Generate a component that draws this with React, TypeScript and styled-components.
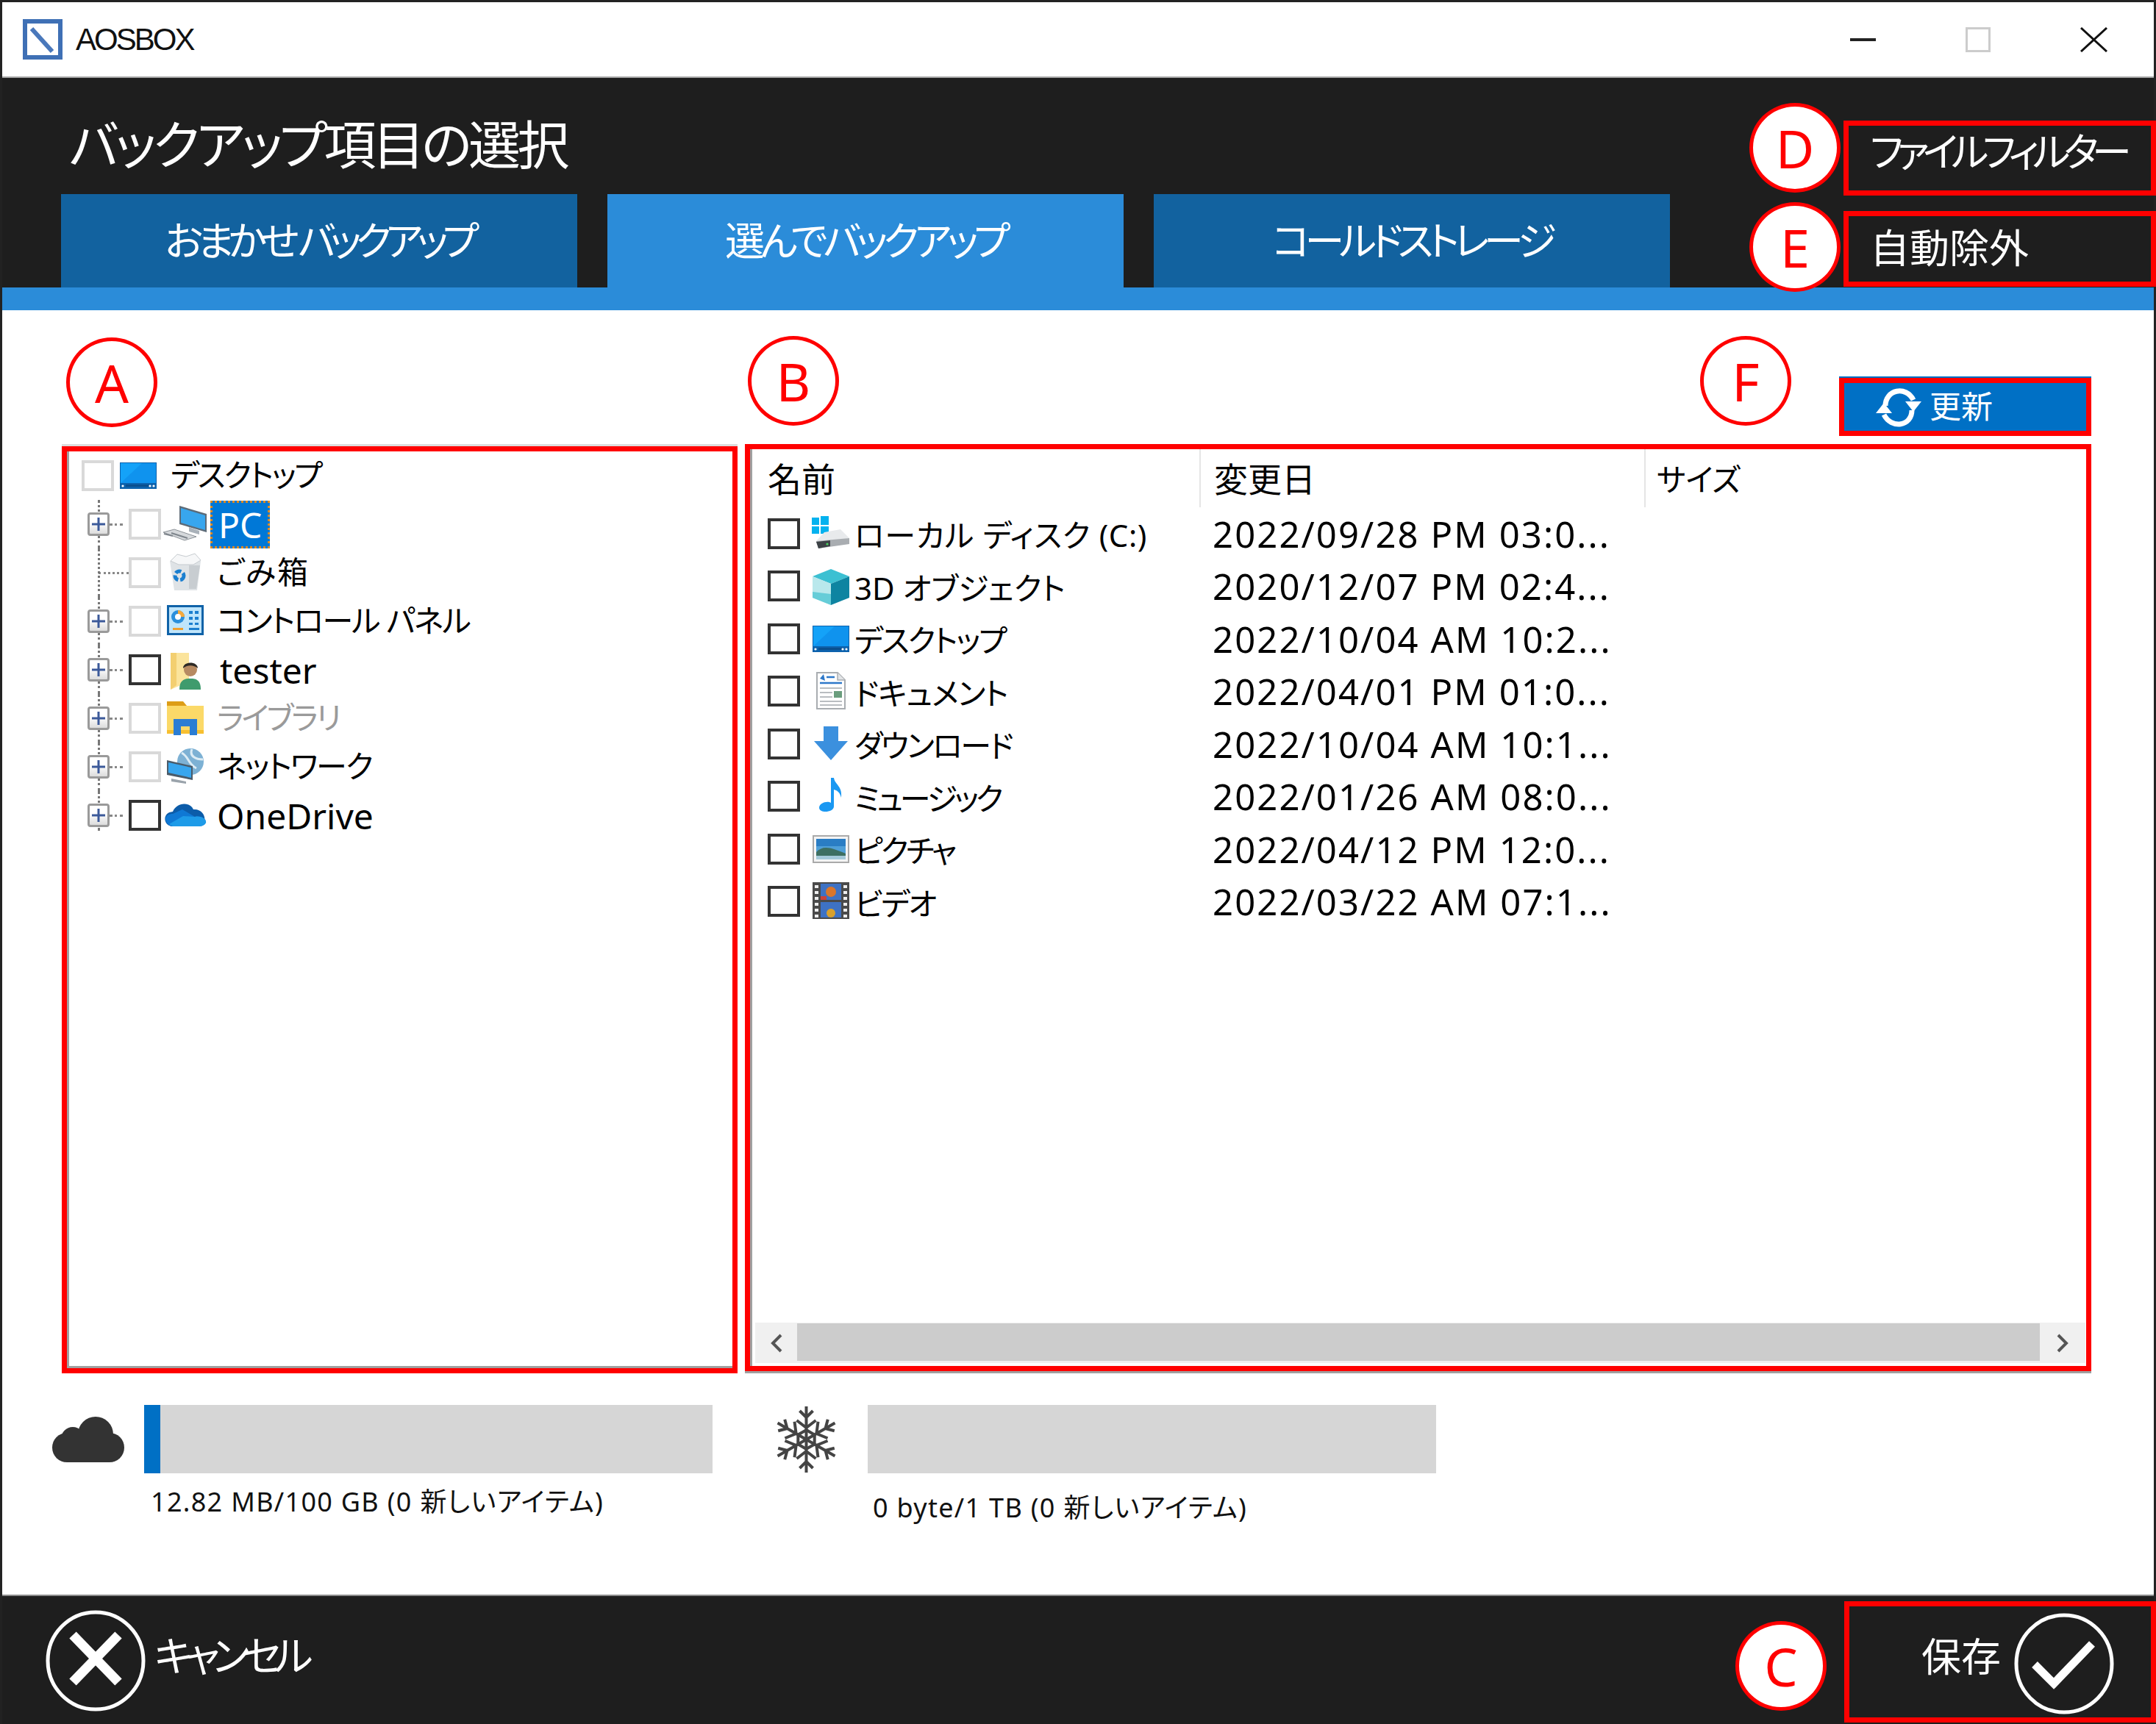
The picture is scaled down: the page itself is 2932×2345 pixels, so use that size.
import React from 'react'
import styled, { createGlobalStyle } from 'styled-components'

const FONT = '"Noto Sans", "Noto Sans CJK JP", sans-serif'

const Global = createGlobalStyle`
  html, body { margin: 0; padding: 0; background: #fff; }
  body { width: 2932px; height: 2345px; overflow: hidden; font-family: ${FONT}; font-feature-settings: "palt" 1; }
  * { box-sizing: border-box; }
`

const Window = styled.div`
  position: relative;
  width: 2932px;
  height: 2345px;
  display: flex;
  flex-direction: column;
  background: #fff;
  border-left: 3px solid #222;
  border-right: 3px solid #222;
`
const TitleBar = styled.div`
  height: 106px;
  flex: none;
  display: flex;
  align-items: center;
  padding: 0 63px 0 28px;
  border-top: 3px solid #222;
  border-bottom: 2px solid #a5a5a5;
`
const AppName = styled.span`
  margin-left: 18px;
  font-family: "Liberation Sans", sans-serif;
  font-size: 42px;
  letter-spacing: -3px;
  color: #111;
`
const WinControls = styled.div`
  margin-left: auto;
  display: flex;
  align-items: center;
  gap: 122px;
`
const Header = styled.div`
  height: 285px;
  flex: none;
  display: flex;
  justify-content: space-between;
  background: #1e1e1e;
`
const HeaderLeft = styled.div`
  padding-left: 80px;
  display: flex;
  flex-direction: column;
`
const Title = styled.div`
  height: 158px;
  padding: 14px 0 0 11px;
  display: flex;
  align-items: center;
  color: #fff;
  font-size: 71px;
  letter-spacing: -4.6px;
`
const Tabs = styled.div`
  display: flex;
  gap: 41px;
`
const Tab = styled.div<{ $active?: boolean; $ls: number }>`
  width: 702px;
  height: 127px;
  padding-bottom: 6px;
  display: flex;
  align-items: center;
  justify-content: center;
  color: #fff;
  font-size: 54px;
  white-space: pre;
  letter-spacing: ${p => p.$ls}px;
  background: ${p => (p.$active ? '#2b8cd9' : '#12629f')};
`
const HeaderRight = styled.div`
  width: 425px;
  margin: 58px -3px 0 0;
  display: flex;
  flex-direction: column;
  gap: 21px;
`
const HeaderLink = styled.div<{ $h: number; $pb: number; $ls: number }>`
  height: ${p => p.$h}px;
  padding: 0 0 ${p => p.$pb}px 29px;
  display: flex;
  align-items: center;
  border: 7px solid #f00;
  color: #fff;
  font-size: 54px;
  white-space: nowrap;
  letter-spacing: ${p => p.$ls}px;
`
const Strip = styled.div`
  height: 31px;
  flex: none;
  background: #2b8cd9;
`
const Content = styled.div`
  flex: 1;
  display: flex;
  flex-direction: column;
`
const Toolbar = styled.div`
  height: 182px;
  flex: none;
  padding: 90px 85px 0 0;
  display: flex;
  justify-content: flex-end;
  align-items: flex-start;
`
const UpdateButton = styled.div`
  width: 343px;
  height: 79px;
  margin-top: 2px;
  padding-left: 42px;
  display: flex;
  align-items: center;
  gap: 10px;
  background: #0070c5;
  border: 7px solid #f00;
  box-shadow: 0 -2px 0 #0070c5;
  color: #fff;
  font-size: 43px;
`
const UpdateText = styled.span`
  margin-top: -6px;
`
const PanelRow = styled.div`
  height: 1264px;
  flex: none;
  padding: 0 85px 0 81px;
  display: flex;
  gap: 10px;
`
const TreePanel = styled.div`
  width: 919px;
  height: 1261px;
  margin-top: 3px;
  border: 7px solid #f00;
  box-shadow: 0 -3px 0 #ddd;
`
const TreeInner = styled.div`
  height: 100%;
  border-left: 3px solid #a0a0a0;
  border-bottom: 3px solid #a0a0a0;
`
const TreeRow = styled.div<{ $root?: boolean; $last?: boolean }>`
  position: relative;
  height: 66px;
  display: flex;
  align-items: center;
  padding-left: ${p => (p.$root ? 17 : 25)}px;
  font-size: 42px;
  color: #000;
  ${p => !p.$root && `
    &::before {
      content: "";
      position: absolute;
      left: 39px;
      top: 0;
      bottom: ${p.$last ? 12 : 0}px;
      border-left: 3px dotted #777;
    }
  `}
`
const Expander = styled.span`
  position: relative;
  z-index: 1;
  width: 30px;
  height: 32px;
  flex: none;
  display: flex;
  align-items: center;
  justify-content: center;
  border: 3px solid #9a9a9a;
  border-radius: 4px;
  background: linear-gradient(#fff 40%, #dcdcdc);
`
const ExpanderSpace = styled.span`
  width: 15px;
  flex: none;
`
const Branch = styled.span<{ $leaf?: boolean }>`
  width: ${p => (p.$leaf ? 41 : 26)}px;
  flex: none;
  padding-right: ${p => (p.$leaf ? 0 : 8)}px;
  &::after {
    content: "";
    display: block;
    border-top: 3px dotted #888;
  }
`
const Check = styled.span<{ $dim?: boolean }>`
  width: 44px;
  height: 42px;
  flex: none;
  background: #fff;
  border: 4px solid ${p => (p.$dim ? '#d9d9d9' : '#333')};
`
const IconSlot = styled.span`
  width: 50px;
  height: 44px;
  flex: none;
  margin-left: 8px;
  display: flex;
  & > svg { width: 50px; height: 44px; overflow: visible; }
`
const TreeLabel = styled.span<{ $gap: number; $ls: number; $dim?: boolean; $selected?: boolean; $latin?: boolean }>`
  margin-left: ${p => p.$gap}px;
  white-space: pre;
  color: ${p => (p.$dim ? '#9a9a9a' : '#000')};
  letter-spacing: ${p => p.$ls}px;
  margin-bottom: 8px;
  ${p => p.$latin && 'font-size: 48px; margin-bottom: 0;'}
  ${p => p.$selected && `
    margin-left: 9px;
    height: 65px;
    padding: 0 11px;
    display: flex;
    align-items: center;
    color: #fff;
    background: #0078d7;
    outline: 3px dotted #e08a1e;
    outline-offset: -3px;
  `}
`
const ListPanel = styled.div`
  width: 1831px;
  height: 1261px;
  border: 7px solid #f00;
  box-shadow: 0 3px 0 #a0a0a0;
`
const ListInner = styled.div`
  height: 100%;
  display: flex;
  flex-direction: column;
  border-left: 3px solid #a0a0a0;
`
const Columns = styled.div`
  display: grid;
  grid-template-columns: 608px 605px 1fr;
`
const HeaderRow = styled(Columns)`
  height: 79px;
  flex: none;
`
const HeadCell = styled.div<{ $first?: boolean; $size?: number; $pl: number }>`
  display: flex;
  align-items: center;
  padding: 0 0 3px ${p => p.$pl}px;
  font-size: ${p => p.$size ?? 46}px;
  color: #000;
  ${p => !p.$first && 'border-left: 2px solid #e5e5e5;'}
`
const ListRow = styled(Columns)`
  height: 71.5px;
  flex: none;
  align-items: center;
  font-size: 42px;
  color: #000;
`
const NameCell = styled.div`
  padding-left: 21px;
  display: flex;
  align-items: center;
`
const ListIcon = styled(IconSlot)`
  margin-left: 17px;
`
const NameText = styled.span<{ $ls: number }>`
  margin-left: 7px;
  white-space: pre;
  letter-spacing: ${p => p.$ls}px;
`
const DateCell = styled.div`
  padding-left: 18px;
  white-space: pre;
  font-size: 49px;
  line-height: 60px;
  letter-spacing: 2.1px;
`
const Scrollbar = styled.div`
  height: 55px;
  flex: none;
  margin: auto 1px 4px 4px;
  display: flex;
  background: #f0f0f0;
`
const ScrollArrow = styled.div<{ $w: number }>`
  width: ${p => p.$w}px;
  flex: none;
  display: flex;
  align-items: center;
  justify-content: center;
`
const ScrollThumb = styled.div`
  flex: 1;
  margin: 1px 0 3px;
  background: #ccc;
`
const StorageRow = styled.div`
  flex: 1;
  padding: 43px 0 0 68px;
  display: flex;
  gap: 86px;
`
const Storage = styled.div<{ $icon: number; $gap: number }>`
  display: grid;
  grid-template-columns: ${p => p.$icon}px 773px;
  column-gap: ${p => p.$gap}px;
  align-content: start;
`
const StorageIcon = styled.div`
  height: 93px;
  display: flex;
  align-items: center;
`
const Bar = styled.div`
  height: 93px;
  background: #d6d6d6;
`
const BarFill = styled.div`
  height: 100%;
  background: #0070c5;
`
const StorageText = styled.div<{ $mt: number; $pl: number }>`
  grid-column: 2;
  margin-top: ${p => p.$mt}px;
  padding-left: ${p => p.$pl}px;
  line-height: 44px;
  font-size: 36px;
  letter-spacing: 1.3px;
  white-space: pre;
  color: #111;
`
const Footer = styled.div`
  height: 176px;
  flex: none;
  display: flex;
  justify-content: space-between;
  background: #1e1e1e;
  border-top: 2px solid #8a8a8a;
  color: #fff;
`
const CancelButton = styled.div`
  padding: 19px 0 0 59px;
  display: flex;
  align-items: flex-start;
  gap: 12px;
  font-size: 56px;
  letter-spacing: -9.5px;
`
const CancelText = styled.span`
  margin-top: 18px;
`
const SaveBox = styled.div`
  width: 424px;
  height: 165px;
  margin: 7px -3px 0 0;
  padding: 5px 50px 0 0;
  display: flex;
  justify-content: flex-end;
  align-items: center;
  gap: 18px;
  border: 7px solid #f00;
  font-size: 54px;
`
const SaveText = styled.span`
  margin-top: -25px;
`
const Marker = styled.div<{ $x: number; $y: number }>`
  position: absolute;
  left: ${p => p.$x - 3}px;
  top: ${p => p.$y}px;
  width: 124px;
  height: 122px;
  display: flex;
  align-items: center;
  justify-content: center;
  background: #fff;
  border: 5px solid #f00;
  border-radius: 50%;
  color: #f00;
  font-family: "Noto Sans", sans-serif;
  font-size: 72px;
  line-height: 1;
`

const Logo = () => (
  <svg width="54" height="55" viewBox="0 0 54 55">
    <rect x="3" y="3" width="48" height="49" fill="#fff" stroke="#3f70b5" strokeWidth="6" />
    <path d="M12 13 L40 44" stroke="#4a78bb" strokeWidth="6" />
  </svg>
)

const Minimize = () => (
  <svg width="35" height="4" viewBox="0 0 35 4"><rect width="35" height="4" fill="#222" /></svg>
)
const Maximize = () => (
  <svg width="34" height="34" viewBox="0 0 34 34"><rect x="1.5" y="1.5" width="31" height="31" fill="none" stroke="#ccc" strokeWidth="3" /></svg>
)
const CloseX = () => (
  <svg width="37" height="34" viewBox="0 0 37 34"><path d="M1 1 L36 33 M36 1 L1 33" stroke="#111" strokeWidth="3" /></svg>
)

const PlusIcon = () => (
  <svg width="18" height="18" viewBox="0 0 18 18"><path d="M9 0 V18 M0 9 H18" stroke="#3c5a9a" strokeWidth="3" /></svg>
)

const Icon = {
  desktop: (
    <svg viewBox="0 0 50 44">
      <rect x="0" y="4" width="50" height="36" fill="#0d62ad" />
      <rect x="1" y="5" width="48" height="27" fill="#14a2f8" />
      <path d="M1 32 L30 5 H49 V32 Z" fill="#0f93ee" />
      <rect x="8" y="34" width="32" height="3" fill="#0a4f8e" />
      <circle cx="4" cy="36" r="1.6" fill="#fff" /><circle cx="41" cy="36" r="1.6" fill="#fff" /><circle cx="46" cy="36" r="1.6" fill="#fff" />
    </svg>
  ),
  pc: (
    <svg viewBox="0 0 50 44">
      <path d="M17 -3 L54 8 V33 L17 22 Z" fill="#5d6b78" />
      <path d="M19 0 L52 10 V30 L19 20 Z" fill="#38a6ee" />
      <path d="M30 26 L44 31 V36 L30 32 Z" fill="#aab2ba" />
      <path d="M-5 33 L10 29 L40 39 L24 44 Z" fill="#d5d8db" stroke="#8c9298" strokeWidth="1" />
      <path d="M-4 35 L8 38 M6 34 L28 41" stroke="#7e858c" strokeWidth="2" />
    </svg>
  ),
  trash: (
    <svg viewBox="0 0 50 44">
      <path d="M4 6 L46 6 L41 46 L10 46 Z" fill="#dfe3e6" />
      <path d="M5 6 L14 -3 L26 0 L38 -4 L46 5 L36 11 L16 11 Z" fill="#f6f7f8" stroke="#c6cbcf" strokeWidth="1" />
      <path d="M30 12 V44 H40 L45 12 Z" fill="#c8cdd1" />
      <circle cx="17" cy="26" r="6" fill="none" stroke="#1a7fd0" strokeWidth="5" strokeDasharray="8 3" />
    </svg>
  ),
  control: (
    <svg viewBox="0 0 50 44">
      <rect x="0" y="0" width="50" height="41" fill="#0f62a8" />
      <rect x="3" y="3" width="44" height="35" fill="#bfe5fb" />
      <circle cx="15" cy="16" r="9" fill="#2a8fdc" />
      <path d="M15 16 V7 A9 9 0 0 1 24 16 Z" fill="#f6a93b" />
      <circle cx="15" cy="16" r="4" fill="#fff" />
      <path d="M30 8 h5 v4 h-5 z M38 8 h5 v4 h-5 z M30 16 h5 v4 h-5 z M38 16 h5 v4 h-5 z M30 24 h5 v3 h-5 z M38 24 h5 v3 h-5 z" fill="#1c7fcf" />
      <rect x="8" y="31" width="14" height="3" fill="#f0a030" />
      <rect x="30" y="31" width="14" height="3" fill="#1c7fcf" />
    </svg>
  ),
  user: (
    <svg viewBox="0 0 50 44">
      <path d="M5 -1 L30 -1 V38 L5 49 Z" fill="#fbe49c" />
      <path d="M5 -1 L13 -1 V43 L5 49 Z" fill="#f3cf70" />
      <path d="M17 49 C17 36 24 34 32 34 C40 34 46 36 46 49 Z" fill="#3f9b6d" />
      <circle cx="32" cy="22" r="9" fill="#b78a62" />
      <path d="M22 20 C22 10 42 10 42 20 C36 15 28 15 22 20 Z" fill="#2e2a26" />
    </svg>
  ),
  library: (
    <svg viewBox="0 0 50 44">
      <path d="M0 -1 H22 L27 5 H0 Z" fill="#dd9d17" />
      <rect x="0" y="5" width="50" height="38" fill="#fbd968" />
      <rect x="0" y="38" width="50" height="5" fill="#f7bf30" />
      <path d="M9 45 V23 H41 V45 H31 V33 H19 V45 Z" fill="#2b7dd3" />
    </svg>
  ),
  network: (
    <svg viewBox="0 0 50 44">
      <circle cx="32" cy="15" r="18" fill="#7db1d4" />
      <path d="M20 3 C30 8 28 18 40 24 M34 -2 C30 8 40 12 49 12" stroke="#dcecf5" strokeWidth="3" fill="none" />
      <path d="M0 13 L35 21 V40 L0 33 Z" fill="#4a5b69" />
      <path d="M2 16 L33 23 V37 L2 30 Z" fill="#38a6ee" />
      <path d="M6 38 L26 42 V45 L6 42 Z" fill="#9aa3ab" />
    </svg>
  ),
  onedrive: (
    <svg viewBox="0 0 50 44">
      <path d="M7 37 C-6 35 -6 18 8 17 C13 4 31 3 36 14 C52 12 58 35 42 37 Z" fill="#0c5ca9" />
      <path d="M-2 27 C-1 22 3 20 8 20 L21 14 L38 24 C48 22 54 28 53 32 C51 36 47 37 42 37 H8 C3 37 -1 33 -2 27 Z" fill="#0f78d4" />
      <path d="M3 34 L22 23 L38 24 C48 22 54 28 53 32 C51 36 47 37 42 37 H8 Z" fill="#1e9be8" />
    </svg>
  ),
  disk: (
    <svg viewBox="0 0 50 44">
      <path d="M-1 0 h10 v10 h-10 z M11 -2 h11 v12 h-11 z M-1 12 h10 v10 h-10 z M11 12 h11 v10 h-11 z" fill="#04b2ef" />
      <path d="M5 32 L16 20 L38 16 L50 28 L15 35 Z" fill="#e8eaec" />
      <path d="M5 32 L50 28 V36 L8 42 Z" fill="#a9adb1" />
      <path d="M5 33 L24 31 V39 L8 42 Z" fill="#3d4246" />
      <circle cx="20" cy="36" r="1.6" fill="#49d45e" />
    </svg>
  ),
  cube: (
    <svg viewBox="0 0 50 44">
      <path d="M0 9 L25 -1 L50 9 L25 19 Z" fill="#3cc0d2" />
      <path d="M0 9 L25 19 V48 L0 38 Z" fill="#b9e8ec" />
      <path d="M50 9 L25 19 V48 L50 38 Z" fill="#0e84a1" />
      <path d="M0 30 L25 33 V48 L0 38 Z" fill="#66cdd8" />
    </svg>
  ),
  doc: (
    <svg viewBox="0 0 50 44">
      <path d="M6 -3 H34 L44 7 V46 H6 Z" fill="#fff" stroke="#a9adb1" strokeWidth="2" />
      <path d="M34 -3 V7 H44" fill="#e2e4e6" stroke="#a9adb1" strokeWidth="1.5" />
      <path d="M10 5 L15 -1 L17 8 Z" fill="#2d78c9" />
      <path d="M19 3 H30 M10 11 H40" stroke="#2d78c9" strokeWidth="2.5" />
      <path d="M10 18 H40 M10 24 H27 M10 30 H27 M10 36 H40 M10 41 H40" stroke="#b9bdc1" strokeWidth="2" />
      <rect x="29" y="22" width="11" height="9" fill="#6a9d7d" />
    </svg>
  ),
  download: (
    <svg viewBox="0 0 50 44">
      <path d="M15 -2 H35 V18 H48 L25 44 L2 18 H15 Z" fill="#3b90de" />
    </svg>
  ),
  music: (
    <svg viewBox="0 0 50 44">
      <path d="M25 -3 H29 C30 6 41 8 39 24 C37 16 33 14 29 13 V36 C29 44 10 46 9 38 C9 31 20 28 25 31 Z" fill="#1a98f2" />
    </svg>
  ),
  picture: (
    <svg viewBox="0 0 50 44">
      <rect x="1" y="4" width="48" height="36" fill="#f4f4f4" stroke="#aaa" strokeWidth="2" />
      <rect x="5" y="8" width="40" height="28" fill="#4f9fd8" />
      <path d="M5 8 H45 V18 H5 Z" fill="#2a7dc4" />
      <path d="M5 26 C15 16 25 20 45 28 V36 H5 Z" fill="#3d6f62" />
      <path d="M5 31 H45 V36 H5 Z" fill="#a4c9d9" />
    </svg>
  ),
  video: (
    <svg viewBox="0 0 50 44">
      <rect x="0" y="-4" width="50" height="50" fill="#4a4a4a" />
      <path d="M3 0 h5 v4 h-5 z M3 8 h5 v4 h-5 z M3 16 h5 v4 h-5 z M3 24 h5 v4 h-5 z M3 32 h5 v4 h-5 z M3 40 h5 v4 h-5 z M42 0 h5 v4 h-5 z M42 8 h5 v4 h-5 z M42 16 h5 v4 h-5 z M42 24 h5 v4 h-5 z M42 32 h5 v4 h-5 z M42 40 h5 v4 h-5 z" fill="#eee" />
      <rect x="11" y="-2" width="28" height="22" fill="#3e72c4" />
      <rect x="11" y="23" width="28" height="21" fill="#3e72c4" />
      <circle cx="25" cy="9" r="7" fill="#d9762c" />
      <circle cx="25" cy="38" r="6" fill="#d9a12c" />
      <rect x="11" y="15" width="8" height="5" fill="#c9423c" />
    </svg>
  ),
}

const Cloud = () => (
  <svg width="98" height="62" viewBox="0 0 98 62" fill="#333">
    <circle cx="59" cy="24" r="24" />
    <circle cx="28" cy="30" r="16" />
    <rect x="0" y="22" width="98" height="40" rx="20" />
  </svg>
)

const Snowflake = () => (
  <svg width="83" height="92" viewBox="-41.5 -46 83 92" fill="none" stroke="#444" strokeWidth="4">
    {[0, 60, 120, 180, 240, 300].map(a => (
      <g key={a} transform={`rotate(${a})`}>
        <path d="M0 0 V-45 M-9 -39 L0 -30 L9 -39 M-13 -26 L0 -16 L13 -26" />
        <path d="M0 -13 L11 -6.5" />
      </g>
    ))}
  </svg>
)

const RefreshIcon = () => (
  <svg width="64" height="64" viewBox="0 0 64 64" fill="none" stroke="#fff" strokeWidth="7">
    <path d="M14 30 C14 8 42 2 52 22" />
    <path d="M50 36 C50 58 22 62 12 42" />
    <path d="M41 24 H63 L52 38 Z M1 40 H23 L12 26 Z" fill="#fff" stroke="none" />
  </svg>
)

const CancelIcon = () => (
  <svg width="136" height="138" viewBox="0 0 136 138" fill="none" stroke="#fff">
    <ellipse cx="68" cy="69" rx="65" ry="66" strokeWidth="5" />
    <path d="M37 34 L99 98 M99 34 L37 98" strokeWidth="13" />
  </svg>
)

const SaveIcon = () => (
  <svg width="136" height="138" viewBox="0 0 136 138" fill="none" stroke="#fff">
    <ellipse cx="68" cy="69" rx="65" ry="66" strokeWidth="5" />
    <path d="M28 70 L54 96 L106 42" strokeWidth="11" />
  </svg>
)

const ChevronLeft = () => (
  <svg width="18" height="26" viewBox="0 0 18 26" fill="none" stroke="#555" strokeWidth="4"><path d="M15 2 L4 13 L15 24" /></svg>
)
const ChevronRight = () => (
  <svg width="18" height="26" viewBox="0 0 18 26" fill="none" stroke="#555" strokeWidth="4"><path d="M3 2 L14 13 L3 24" /></svg>
)

const treeItems = [
  { icon: Icon.pc, label: 'PC', ls: 0, gap: 18, plus: true, dim: true, selected: true, latin: true },
  { icon: Icon.trash, label: 'ごみ箱', ls: 2, gap: 18, plus: false, dim: true },
  { icon: Icon.control, label: 'コントロール パネル', ls: -1.7, gap: 18, plus: true, dim: true },
  { icon: Icon.user, label: 'tester', ls: 0, gap: 22, plus: true, latin: true },
  { icon: Icon.library, label: 'ライブラリ', ls: -2.9, gap: 18, plus: true, dim: true, grey: true },
  { icon: Icon.network, label: 'ネットワーク', ls: -1.9, gap: 18, plus: true, dim: true },
  { icon: Icon.onedrive, label: 'OneDrive', ls: 0, gap: 18, plus: true, latin: true },
]

const files = [
  { icon: Icon.disk, name: 'ローカル ディスク (C:)', ls: 0.6, date: '2022/09/28 PM 03:0...' },
  { icon: Icon.cube, name: '3D オブジェクト', ls: 0, date: '2020/12/07 PM 02:4...' },
  { icon: Icon.desktop, name: 'デスクトップ', ls: -2.25, date: '2022/10/04 AM 10:2...' },
  { icon: Icon.doc, name: 'ドキュメント', ls: -1, date: '2022/04/01 PM 01:0...' },
  { icon: Icon.download, name: 'ダウンロード', ls: -2.5, date: '2022/10/04 AM 10:1...' },
  { icon: Icon.music, name: 'ミュージック', ls: -4, date: '2022/01/26 AM 08:0...' },
  { icon: Icon.picture, name: 'ピクチャ', ls: -3.3, date: '2022/04/12 PM 12:0...' },
  { icon: Icon.video, name: 'ビデオ', ls: -2.2, date: '2022/03/22 AM 07:1...' },
]

const markers = [
  { text: 'A', x: 90, y: 459 },
  { text: 'B', x: 1017, y: 457 },
  { text: 'C', x: 2360, y: 2205 },
  { text: 'D', x: 2379, y: 140 },
  { text: 'E', x: 2379, y: 275 },
  { text: 'F', x: 2312, y: 457 },
]

export default function App() {
  return (
    <Window>
      <Global />
      <TitleBar>
        <Logo />
        <AppName>AOSBOX</AppName>
        <WinControls>
          <Minimize />
          <Maximize />
          <CloseX />
        </WinControls>
      </TitleBar>

      <Header>
        <HeaderLeft>
          <Title>バックアップ項目の選択</Title>
          <Tabs>
            <Tab $ls={-7.7}>おまかせ バックアップ</Tab>
            <Tab $active $ls={-6}>選んでバックアップ</Tab>
            <Tab $ls={-6.8}>コールドストレージ</Tab>
          </Tabs>
        </HeaderLeft>
        <HeaderRight>
          <HeaderLink $h={102} $pb={24} $ls={-8.5}>ファイルフィルター</HeaderLink>
          <HeaderLink $h={103} $pb={9} $ls={0}>自動除外</HeaderLink>
        </HeaderRight>
      </Header>
      <Strip />

      <Content>
        <Toolbar>
          <UpdateButton>
            <RefreshIcon />
            <UpdateText>更新</UpdateText>
          </UpdateButton>
        </Toolbar>

        <PanelRow>
          <TreePanel>
            <TreeInner>
              <TreeRow $root>
                <Check $dim />
                <IconSlot>{Icon.desktop}</IconSlot>
                <TreeLabel $gap={19} $ls={-2.4}>デスクトップ</TreeLabel>
              </TreeRow>
              {treeItems.map((item, i) => (
                <TreeRow key={item.label} $last={i === treeItems.length - 1}>
                  {item.plus ? <Expander><PlusIcon /></Expander> : <ExpanderSpace />}
                  <Branch $leaf={!item.plus} />
                  <Check $dim={item.dim} />
                  <IconSlot>{item.icon}</IconSlot>
                  <TreeLabel $gap={item.gap} $ls={item.ls} $dim={item.grey} $selected={item.selected} $latin={item.latin}>
                    {item.label}
                  </TreeLabel>
                </TreeRow>
              ))}
            </TreeInner>
          </TreePanel>

          <ListPanel>
            <ListInner>
              <HeaderRow>
                <HeadCell $first $pl={21}>名前</HeadCell>
                <HeadCell $pl={18}>変更日</HeadCell>
                <HeadCell $size={42} $pl={15}>サイズ</HeadCell>
              </HeaderRow>
              {files.map(f => (
                <ListRow key={f.name}>
                  <NameCell>
                    <Check />
                    <ListIcon>{f.icon}</ListIcon>
                    <NameText $ls={f.ls}>{f.name}</NameText>
                  </NameCell>
                  <DateCell>{f.date}</DateCell>
                </ListRow>
              ))}
              <Scrollbar>
                <ScrollArrow $w={57}><ChevronLeft /></ScrollArrow>
                <ScrollThumb />
                <ScrollArrow $w={62}><ChevronRight /></ScrollArrow>
              </Scrollbar>
            </ListInner>
          </ListPanel>
        </PanelRow>

        <StorageRow>
          <Storage $icon={98} $gap={27}>
            <StorageIcon><Cloud /></StorageIcon>
            <Bar><BarFill style={{ width: '2.8%' }} /></Bar>
            <StorageText $mt={17} $pl={9}>12.82 MB/100 GB (0 新しいアイテム)</StorageText>
          </Storage>
          <Storage $icon={83} $gap={42}>
            <StorageIcon><Snowflake /></StorageIcon>
            <Bar />
            <StorageText $mt={25} $pl={7}>0 byte/1 TB (0 新しいアイテム)</StorageText>
          </Storage>
        </StorageRow>
      </Content>

      <Footer>
        <CancelButton>
          <CancelIcon />
          <CancelText>キャンセル</CancelText>
        </CancelButton>
        <SaveBox>
          <SaveText>保存</SaveText>
          <SaveIcon />
        </SaveBox>
      </Footer>

      {markers.map(m => (
        <Marker key={m.text} $x={m.x} $y={m.y}>{m.text}</Marker>
      ))}
    </Window>
  )
}
